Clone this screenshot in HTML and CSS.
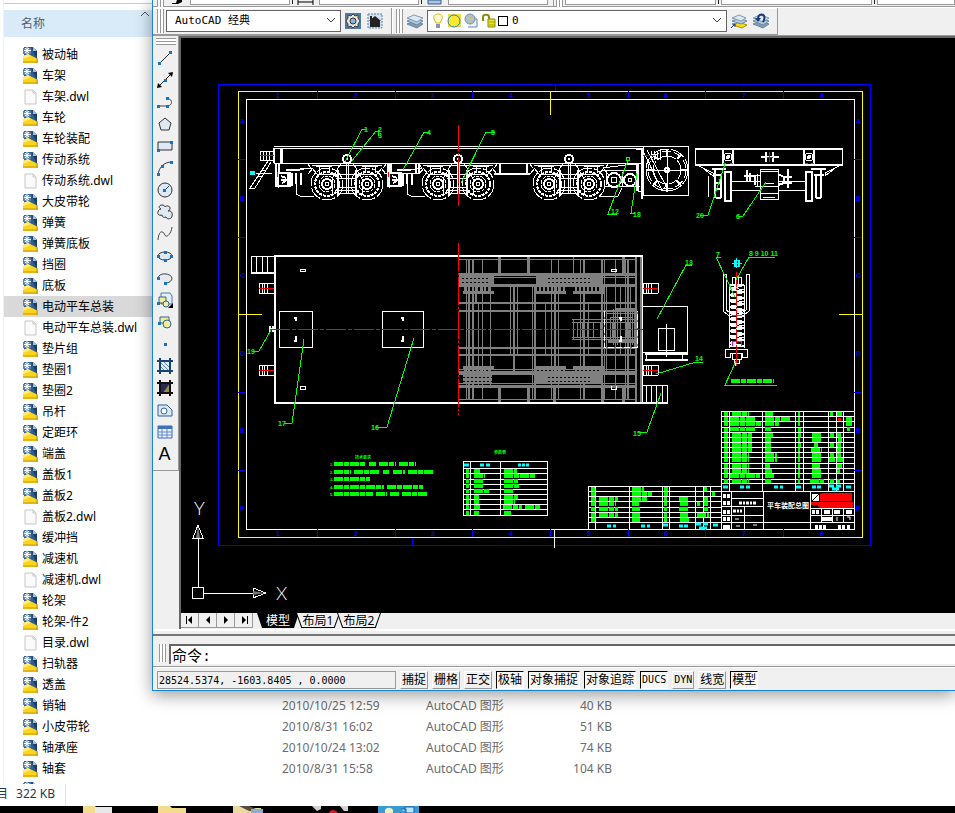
FILE: index.html
```html
<!DOCTYPE html>
<html lang="zh-CN">
<head>
  <meta charset="UTF-8">
  <meta name="viewport" content="width=device-width, initial-scale=1.0">
  <title>AutoCAD</title>
  <link rel="stylesheet" href="styles.css">
</head>
<body>
  <!-- shared symbols -->
  <svg class="symbols" aria-hidden="true">
    <symbol id="dwg" viewBox="0 0 16 16">
      <path d="M1 0h9l4 4v9H1z" fill="#2f5d8c"/>
      <path d="M8 0l6 4v8z" fill="#1b3c66"/>
      <path d="M10 0l4 4h-4z" fill="#a9bfd6"/>
      <path d="M0 1h8v6H0z" fill="#5c83aa"/>
      <path d="M4 0v7M1 3.500h7M2 1l4 5M6 1l-4 5" stroke="#fff"/>
      <path d="M0 9l5-2 10 5v4H0z" fill="#fbd51c"/>
      <path d="M0 9l5-2 3 2-8 3z" fill="#ffea8a"/>
      <path d="M0 15h15M14 11v5" stroke="#c9940e"/>
    </symbol>
    <symbol id="doc" viewBox="0 0 16 16">
      <path d="M2 1h8l3 3v11H2z" fill="#fafafa" stroke="#c6c6c6"/>
      <path d="M10 1v3h3" fill="none" stroke="#c6c6c6"/>
    </symbol>
    <symbol id="layers" viewBox="0 0 16 16">
      <path d="M0 11l7-3 9 3-6 4z" fill="#7f9cba" stroke="#6b87a5"/>
      <path d="M0 8l7-3 9 3-6 4z" fill="#b5c8da" stroke="#6b87a5"/>
      <path d="M0 5l7-3 9 3-6 4z" fill="#dce8f2" stroke="#7d99b6"/>
    </symbol>
  </svg>

  <main class="explorer">
    <table class="files">
      <thead>
        <tr><th class="name">名称<svg class="sort" viewBox="0 0 10 6"><path d="M1 5l4-4 4 4" fill="none" stroke="#555"/></svg></th><th></th><th></th><th></th></tr>
      </thead>
      <tbody>
        <tr><td><svg><use href="#dwg"/></svg>被动轴</td></tr>
        <tr><td><svg><use href="#dwg"/></svg>车架</td></tr>
        <tr><td><svg><use href="#doc"/></svg>车架.dwl</td></tr>
        <tr><td><svg><use href="#dwg"/></svg>车轮</td></tr>
        <tr><td><svg><use href="#dwg"/></svg>车轮装配</td></tr>
        <tr><td><svg><use href="#dwg"/></svg>传动系统</td></tr>
        <tr><td><svg><use href="#doc"/></svg>传动系统.dwl</td></tr>
        <tr><td><svg><use href="#dwg"/></svg>大皮带轮</td></tr>
        <tr><td><svg><use href="#dwg"/></svg>弹簧</td></tr>
        <tr><td><svg><use href="#dwg"/></svg>弹簧底板</td></tr>
        <tr><td><svg><use href="#dwg"/></svg>挡圈</td></tr>
        <tr><td><svg><use href="#dwg"/></svg>底板</td></tr>
        <tr class="selected"><td><svg><use href="#dwg"/></svg>电动平车总装</td></tr>
        <tr><td><svg><use href="#doc"/></svg>电动平车总装.dwl</td></tr>
        <tr><td><svg><use href="#dwg"/></svg>垫片组</td></tr>
        <tr><td><svg><use href="#dwg"/></svg>垫圈1</td></tr>
        <tr><td><svg><use href="#dwg"/></svg>垫圈2</td></tr>
        <tr><td><svg><use href="#dwg"/></svg>吊杆</td></tr>
        <tr><td><svg><use href="#dwg"/></svg>定距环</td></tr>
        <tr><td><svg><use href="#dwg"/></svg>端盖</td></tr>
        <tr><td><svg><use href="#dwg"/></svg>盖板1</td></tr>
        <tr><td><svg><use href="#dwg"/></svg>盖板2</td></tr>
        <tr><td><svg><use href="#doc"/></svg>盖板2.dwl</td></tr>
        <tr><td><svg><use href="#dwg"/></svg>缓冲挡</td></tr>
        <tr><td><svg><use href="#dwg"/></svg>减速机</td></tr>
        <tr><td><svg><use href="#doc"/></svg>减速机.dwl</td></tr>
        <tr><td><svg><use href="#dwg"/></svg>轮架</td></tr>
        <tr><td><svg><use href="#dwg"/></svg>轮架-件2</td></tr>
        <tr><td><svg><use href="#doc"/></svg>目录.dwl</td></tr>
        <tr><td><svg><use href="#dwg"/></svg>扫轨器</td></tr>
        <tr><td><svg><use href="#dwg"/></svg>透盖</td></tr>
        <tr><td><svg><use href="#dwg"/></svg>销轴</td><td>2010/10/25 12:59</td><td>AutoCAD 图形</td><td>40 KB</td></tr>
        <tr><td><svg><use href="#dwg"/></svg>小皮带轮</td><td>2010/8/31 16:02</td><td>AutoCAD 图形</td><td>51 KB</td></tr>
        <tr><td><svg><use href="#dwg"/></svg>轴承座</td><td>2010/10/24 13:02</td><td>AutoCAD 图形</td><td>74 KB</td></tr>
        <tr><td><svg><use href="#dwg"/></svg>轴套</td><td>2010/8/31 15:58</td><td>AutoCAD 图形</td><td>104 KB</td></tr>
        <tr><td><svg><use href="#dwg"/></svg></td></tr>
      </tbody>
    </table>
    <footer class="info"><span class="cut">目</span><span class="total">322 KB</span></footer>
  </main>

  <section class="cad">
    <div class="strip">
      <i class="grip"></i>
      <svg class="brush" viewBox="0 0 12 6"><path d="M6 0h5v2l-4 2H1V3h4z"/></svg>
      <i class="field w100"></i><i class="bar"></i>
      <svg class="dim" viewBox="0 0 20 6"><path d="M2 0v5M17 0v5M2 2h15" fill="none" stroke="#000"/></svg>
      <i class="field w100"></i><i class="bar"></i>
      <svg class="tbl" viewBox="0 0 16 6"><path d="M1 0h13v4H1z" fill="#a9c4e6" stroke="#35588c"/></svg>
      <i class="field w100"></i><i class="end"></i><i class="grip"></i>
      <i class="field w150"></i><i class="bar"></i><i class="field w150"></i><i class="bar"></i><i class="field rest"></i>
    </div>

    <div class="toolbars">
      <div class="toolbar">
        <i class="grip"></i>
        <select class="workspace-select" aria-label="工作空间"><option>AutoCAD 经典</option></select>
        <button class="tool" aria-label="工作空间设置"><svg viewBox="0 0 16 16"><path d="M0 0h16v16H0z" fill="#4d7ba3"/><path d="M8 1l2 2 3-1 0 3 2 3-2 3 0 3-3-1-2 2-2-2-3 1 0-3-2-3 2-3 0-3 3 1z" fill="#e8e4da" stroke="#444"/><circle cx="8" cy="8" r="3" fill="#8ab4d8" stroke="#333"/></svg></button>
        <button class="tool" aria-label="我的工作空间"><svg viewBox="0 0 16 16"><path d="M1 1h14v14H1z" fill="#d5e2ee" stroke="#5b7fa5" stroke-dasharray="2 1"/><path d="M2 8l6-5 6 5h-1v6H3V8z" fill="#222"/><path d="M4 3v4" stroke="#222" stroke-width="2"/></svg></button>
      </div>
      <div class="toolbar">
        <i class="grip"></i>
        <button class="tool" aria-label="图层特性"><svg><use href="#layers"/></svg></button>
        <div class="layer">
          <svg class="layer-icons" viewBox="0 0 66 16">
            <path d="M6 1c-3 0-5 2-4 5l2 4h4l2-4c1-3-1-5-4-5z" fill="#fffad0" stroke="#d6b61e"/><path d="M4 11h4v4H4z" fill="#8795a8"/>
            <path d="M16 1h13v13H16z" fill="#e8dd50"/><circle cx="22" cy="8" r="6" fill="#ffe92e" stroke="#2383b5"/>
            <path d="M38 6h7v8h-9" fill="#eef3f8" stroke="#6487b0"/><circle cx="38" cy="6" r="5" fill="#a9bfd8" stroke="#6d90b8"/><path d="M38 2v8M34 6h8" stroke="#d9c65a"/>
            <path d="M51 8V4c0-3 6-3 6 0v4" fill="none" stroke="#8b8b10" stroke-width="2"/><path d="M56 6h7v8h-7z" fill="#e5e820" stroke="#8b8b10"/><path d="M57 9h6M57 12h6" stroke="#a5a510"/>
          </svg>
          <i class="swatch"></i>
          <select aria-label="图层"><option>0</option></select>
        </div>
        <button class="tool" aria-label="置为当前"><svg viewBox="0 0 16 16"><path d="M2 12l6-3 8 3-5 3z" fill="#f3dc1c" stroke="#ad9000"/><path d="M1 8l7-3 8 3-6 3z" fill="#b5c8da" stroke="#6b87a5"/><path d="M1 5l7-3 7 3-5 3z" fill="#dce8f2" stroke="#7d99b6"/><path d="M0 15l4-4M1 11h3v3" fill="none" stroke="#123a72"/></svg></button>
        <button class="tool" aria-label="上一个图层"><svg viewBox="0 0 16 16"><use href="#layers"/><path d="M10 9c5-8-4-10-5-4" fill="none" stroke="#173a74" stroke-width="2"/><path d="M2 5h6l-3 4z" fill="#173a74"/></svg></button>
      </div>
    </div>

    <div class="workspace">
      <div class="palette-dock">
        <div class="palette">
          <i class="grip-h"></i>
          <button aria-label="直线"><svg viewBox="0 0 16 16"><path d="M2 14L14 2" stroke="#222"/><path class="n" d="M1 12h3v3H1zM12 1h3v3h-3z"/></svg></button>
          <button aria-label="构造线"><svg viewBox="0 0 16 16"><path d="M1 15L15 1" stroke="#222"/><path d="M0 16l1-5 4 4zM16 0l-5 1 4 4z"/><path class="n" d="M7 7h3v3H7z"/></svg></button>
          <button aria-label="多段线"><svg viewBox="0 0 16 16"><path d="M1 12h9c6 0 6-8 0-7" fill="none" stroke="#444"/><path class="n" d="M0 11h3v3H0zM9 11h3v3H9zM9 3h3v3H9z"/></svg></button>
          <button aria-label="正多边形"><svg viewBox="0 0 16 16"><path class="f" d="M8 2l6 5-2 7H4L2 7z"/></svg></button>
          <button aria-label="矩形"><svg viewBox="0 0 16 16"><path class="f" d="M1 4h14v8H1z"/><path class="n" d="M0 11h3v3H0zM13 3h3v3h-3z"/></svg></button>
          <button aria-label="圆弧"><svg viewBox="0 0 16 16"><path d="M1 15C2 7 7 2 15 2" fill="none" stroke="#333"/><path class="n" d="M0 13h3v3H0zM4 5h3v3H4zM13 1h3v3h-3z"/></svg></button>
          <button aria-label="圆"><svg viewBox="0 0 16 16"><circle class="f" cx="8" cy="8" r="7"/><path d="M8 8l4-4" stroke="#16549b"/><path class="n" d="M6 7h3v3H6z"/></svg></button>
          <button aria-label="修订云线"><svg viewBox="0 0 16 16"><path class="f" d="M4 5C1 4 2 1 5 1c2 0 3 1 3 2 1-2 6-1 5 2-1 1-1 2-2 2 3-1 5 2 4 5 0 3-5 4-6 1-2 1-4 0-4-2-3 1-5-1-4-3 0-1 1-3 3-3z"/></svg></button>
          <button aria-label="样条曲线"><svg viewBox="0 0 16 16"><path d="M1 14C2 2 7 6 8 9s6 0 7-8" fill="none" stroke="#444"/></svg></button>
          <button aria-label="椭圆"><svg viewBox="0 0 16 16"><ellipse class="f" cx="8" cy="8" rx="7" ry="4"/><path class="n" d="M0 7h3v3H0zM13 7h3v3h-3zM7 3h3v3H7zM7 11h3v3H7z"/></svg></button>
          <button aria-label="椭圆弧"><svg viewBox="0 0 16 16"><path d="M1 8c1-6 13-5 14 0 0 3-3 5-7 5" fill="#e2ebf4" stroke="#444"/><path class="n" d="M0 7h3v3H0zM7 12h3v3H7z"/></svg></button>
          <button aria-label="插入块"><svg viewBox="0 0 16 16"><path d="M4 1h9l2 3v8H4z" fill="#e4eef8" stroke="#4b7db0"/><path class="y" d="M2 5h7v6H2z"/><circle class="y" cx="9" cy="12" r="3"/><path class="n" d="M0 10h3v3H0z"/><path d="M16 11v5h-5z"/></svg></button>
          <button aria-label="创建块"><svg viewBox="0 0 16 16"><path class="y" d="M3 3h9v6H3z"/><circle class="y" cx="10" cy="10" r="4"/><path class="n" d="M1 8h3v3H1z"/></svg></button>
          <button aria-label="点"><svg viewBox="0 0 16 16"><path class="n" d="M7 7h3v3H7z"/></svg></button>
          <button aria-label="图案填充"><svg viewBox="0 0 16 16"><path d="M3 3h10v10H3z" fill="#e3edf6"/><path d="M3 4l9 9M7 4l6 6M3 8l5 5" stroke="#5e88b4"/><path d="M3 0v16M13 0v16M0 3h16M0 13h16" stroke="#174475" stroke-width="2"/></svg></button>
          <button aria-label="渐变色"><svg viewBox="0 0 16 16"><path d="M3 3h10v10H3z" fill="#252a58"/><path d="M13 3v10H6z" fill="#94903f"/><path d="M3 0v16M13 0v16M0 3h16M0 13h16" stroke="#111" stroke-width="2"/></svg></button>
          <button aria-label="面域"><svg viewBox="0 0 16 16"><path d="M1 3h9l5 5v6H1z" fill="#dae8f5" stroke="#2d659b"/><circle cx="7" cy="9" r="3" fill="#fff" stroke="#2d659b"/></svg></button>
          <button aria-label="表格"><svg viewBox="0 0 16 16"><path d="M1 2h14v12H1z" fill="#eaf2fc" stroke="#3d69b0"/><path d="M1 2h14v3H1z" fill="#3e70c0"/><path d="M1 8h14M1 11h14M5 5v9M10 5v9" stroke="#5f8acb"/></svg></button>
          <button class="mtext" aria-label="多行文字">A</button>
        </div>
      </div>

      <div class="view">
        <div class="canvas">
          <svg viewBox="181 38 774 575" preserveAspectRatio="xMinYMin slice">
            <defs>
              <g id="wheel"><circle r="16" stroke-dasharray="14 2"/><circle r="12" stroke-width="2" stroke-dasharray="3 1"/><circle r="8" stroke-dasharray="4 1"/><circle r="5" stroke-width="2"/><circle r="2"/></g>
              <g id="bogie">
                <use href="#wheel" x="-20" y="184"/><use href="#wheel" x="20" y="184"/>
                <circle cy="159" r="4" stroke-width="2"/><circle cy="159" r="1"/>
                <path d="M-6 163l-9 16v16M6 163l9 16v16M-1 164v29M1 164v29M-35 165H35M-35 168l5 6H30l5-6M-28 166v7M-18 166v7M18 166v7M28 166v7M-8 178H8M-8 187H8M-12 190H12M-10 193H10M-40 163l4 5M40 163l-4 5M-34 168l-5 6M34 168l5 6"/>
                <path stroke-width="2" d="M-31 166H-15M15 166H31M-9 170v25M9 170v25"/>
              </g>
              <g id="gearbox"><path stroke-width="2" d="M0 173H12V186H0zM8 170H22M14 173v13M18 173v11M23 173v12M3 176l5 2M4 183l5-3M3 180h6M10 174v11"/><path d="M18 180v14l4 2H36M12 171L33 168M0 163v25"/></g>
              <g id="coupler"><path d="M0 0H15M0 10H15M0 1v9M3 0v10M5 0v10M8 0v10M15 0v10"/><path class="red" d="M0 5H15"/></g>
              <g id="hub"><path d="M-5 -8V7M5 -8V7" stroke-width="2"/><circle r="4"/><circle r="1" stroke-width="2"/></g>
            </defs>

            <!-- sheet frames -->
            <g class="line">
              <path class="blue" d="M218 84H870V545H218zM412 538v7M555 84v7"/>
              <path class="yellow" d="M238 91H862V537H238zM550 91v24M238 314h24M839 314h23"/>
              <path d="M246 99H854V529H246zM554 529v19"/>
              <path class="blue" d="M317 91v8M395 91v8M472 91v8M628 91v8M705 91v8M783 91v8M317 529v8M395 529v8M472 529v8M550 529v8M628 529v8M705 529v8M783 529v8M238 159h8M238 237h8M238 392h8M238 470h8M854 159h8M854 237h8M854 392h8M854 470h8"/>
            </g>
            <g class="zone">
              <text x="276" y="98">1</text><text x="354" y="98">2</text><text x="431" y="98">3</text><text x="509" y="98">4</text><text x="587" y="98">5</text><text x="664" y="98">6</text><text x="742" y="98">7</text><text x="820" y="98">8</text>
              <text x="276" y="536">1</text><text x="354" y="536">2</text><text x="431" y="536">3</text><text x="509" y="536">4</text><text x="587" y="536">5</text><text x="664" y="536">6</text><text x="742" y="536">7</text><text x="820" y="536">8</text>
              <text x="240" y="124">A</text><text x="240" y="201">B</text><text x="240" y="278">C</text><text x="240" y="356">D</text><text x="240" y="433">E</text><text x="240" y="511">F</text>
              <text x="856" y="124">A</text><text x="856" y="201">B</text><text x="856" y="278">C</text><text x="856" y="356">D</text><text x="856" y="433">E</text><text x="856" y="511">F</text>
            </g>

            <!-- side view -->
            <g class="line">
              <path d="M274 146H643M274 148H643M281 163H643M274 148H282V163H274zM260 151H273V160H260zM263 151v9M266 151v9M269 151v9M256 173h16M268 161L250 188H255L271 162M262 170h4M258 176h4"/>
              <path stroke-width="2" d="M274 148v15M281 149v15M276 164v23M279 164v9M388 164v23M391 164v9M416 164v10M419 164v10M500 164v10M527 164v10M494 174h36"/>
              <path d="M384 173h36M300 168h13"/>
              <use href="#bogie" x="347"/><use href="#bogie" x="458"/><use href="#bogie" x="569"/>
              <use href="#gearbox" x="278"/><use href="#gearbox" x="389"/>
              <circle cx="614" cy="180" r="7" stroke-width="2"/><circle cx="614" cy="180" r="3"/><circle cx="630" cy="180" r="6" stroke-width="2"/><circle cx="630" cy="180" r="2"/>
              <path d="M603 170H638M604 186H640M600 196H618L622 188M603 168L625 165 637 164M636 149H643V191H638V164M606 173v12M622 172v14M643 146H688V195H643zM644 153L662 190 666 186 647 150"/>
              <path stroke-width="2" d="M642 148V199M637 164V191"/>
              <circle cx="667" cy="170" r="21" stroke-dasharray="15 2"/><circle cx="667" cy="170" r="19" stroke-dasharray="9 3"/><circle cx="667" cy="170" r="14" stroke-dasharray="9 2"/><circle cx="667" cy="170" r="2" stroke-width="2"/>
              <path stroke-width="2" d="M667 149v8M667 184v8M646 170h9M680 170h8M653 155l4 4M681 155l-4 4M653 185l4-4M681 185l-4-4"/><path d="M667 157v27M655 170h25M651 151v9M654 151v9M657 151v9M660 151v9"/>
              <path class="red" d="M260 155h14M643 155h12M277 172v5M388 172v5"/>
              <path class="red" stroke-dasharray="26 2 2 2" d="M458 125V206"/>
            </g>
            <rect x="250" y="171" width="5" height="4" fill="#0ff"/>

            <!-- end view -->
            <g class="line">
              <path d="M695 149H842V164H695zM697 165L713 173V176L704 169M841 165L825 173V176L834 169M708 176V197M731 181H760M778 181H806M731 190H760M778 190H806"/>
              <path stroke-width="2" d="M695 149H843M695 165H843M761 157h18M766 152v10M773 152v10M725 172V201H731V172zM806 172V201H812V172zM715 170V198M721 174V198M816 174V198M821 170V198M712 169H726M811 169H826M714 175H722M814 175H824M716 183h4M716 189h4M716 198h5M816 198h5M744 176h12M778 174L784 177V183L778 185M788 169v19M785 177h7M785 183h7M747 170v12M750 173v8M755 175v10"/>
              <path d="M760 169H778V199H760zM760 171h18M760 186h18M760 193h18M763 197h12M757 174V186M755 175h6M755 186h6M766 183h8"/>
              <use href="#hub" x="728" y="157"/><use href="#hub" x="809" y="157"/>
              <path class="red" d="M769 152v10M767 157h6"/><path stroke="#f0f" d="M723 163h3M730 163h3M805 163h3M811 163h3"/>
            </g>

            <!-- plan view, open half -->
            <g class="line grey">
              <path d="M459 259H637M459 277H637M459 369H637M459 374H637M459 383H637M459 385H637M459 399H637M466 259V399M478 303V385M482 259V399M490 285V385M510 285V355M517 285V355M532 285V399M545 303V355M551 259V399M558 259V399M573 256V277M580 259V399M588 303V355M604 259V399M606 285V372M615 259V399M620 285V355M625 259V399M630 285V355"/>
              <path stroke-width="2" d="M459 303H637M459 311H637M459 348H637M459 355H637M469 259V399M473 259V399M476 285V303M514 285V372M535 285V399M555 285V372M584 259V399M602 259V399M628 259V399M636 257V402M641 257V402"/>
              <path stroke-width="3" d="M459 274H637M459 285H637M499 256V276M528 256V276M623 256V276M499 386V402M528 386V402M554 386V402M602 386V402M623 386V402M459 372H637M459 386H637"/>
              <path stroke-width="10" d="M459 280H494M536 280H603M463 379H492M536 379H602"/>
              <path stroke-width="3" d="M463 292H494M534 292H566M573 292H605M463 367H494M534 367H566M573 367H605"/>
              <path stroke-width="4" stroke-dasharray="2 2" d="M464 289H492M535 289H565M575 289H604M464 371H492M535 371H565M575 371H604"/>
              <path d="M572 319H637M572 322H637M572 337H637M572 339H637M573 319V339M577 322V337M582 322V337M587 322V337M593 322V337M600 322V337M606 313H636M610 317H632V342H610zM613 309V345M617 309V345M632 309V345"/>
              <path stroke-width="4" d="M615 310H637M608 341H634M636 311V348M614 322V337M628 322V337"/>
            </g>
            <g class="line"><path stroke="#000" stroke-dasharray="2 2" d="M462 278H490M548 278H590M462 282H490M548 282H590M463 377H492M548 377H590M463 381H492M548 381H590"/></g>

            <g class="line">
              <path stroke-width="2" d="M643 256H275V403H643M251 273H275"/>
              <path d="M642 255V403M251 256H275M251 256V273M256 256V273M262 256V273M267 256V273M279 311H312V347H279zM382 311H423V347H382zM300 269h5v2h-5zM300 386h5v3h-5zM611 269h5v2h-5zM611 386v3h5v-3"/>
              <path stroke-dasharray="6 2" d="M604 311V347H637V311"/>
              <path stroke-width="2" d="M294 318h2v3M296 336v5h-2M401 318h2v3M403 336v5h-2M619 318h2v3M621 336v5h-2M270 326v6M273 326v6M269 329h5"/>
              <use href="#coupler" x="259" y="283"/><use href="#coupler" x="259" y="365"/><use href="#coupler" x="643" y="283"/><use href="#coupler" x="643" y="365"/>
              <path d="M643 306H687V352H643M658 328H674V350H658zM666 324V357M646 355v4M682 355v4M643 385H667V403H643M646 386v17M651 386v17M656 386v17M662 386v17"/>
              <path stroke-width="2" d="M645 354H688M645 360H688M643 403H668"/>
              <path class="red" stroke-dasharray="20 2 4 2" d="M270 329H643"/><path class="red" stroke-dasharray="28 2 2 2" d="M458 243V415"/>
            </g>

            <!-- spring -->
            <g class="line">
              <path d="M723 274V311L728 315H744L749 311V274H746V310L743 312H729L726 310V274z"/>
              <path d="M732 277H741V284H732zM735 277V284M738 277V284"/>
              <path stroke-width="2" d="M729 285H744L729 289 744 292 729 295 744 298 729 301 744 304 729 307 744 310 729 313 744 316 729 319 744 322 729 325 744 328 729 331 744 334 729 337 744 340 729 343 744 346H729"/>
              <path d="M729 285V348M744 285V348M729 287l15 3M729 299l15 3M729 311l15 3M729 323l15 3M729 335l15 3"/>
              <path d="M725 349H747V357H742V353H730V357H725zM732 353H741V359H732zM734 359H739V363H734zM735 363V366"/>
              <path stroke="#f0f" d="M732 346V341H741V346M732 315h10"/><path class="red" stroke-dasharray="15 1 2 1" d="M736 272V367"/>
              <path stroke="#0ff" d="M734 260H739V266H734zM732 263H742M736 258V268M735 260v6M738 260v6"/>
            </g>

            <!-- leaders -->
            <g class="line green">
              <path d="M345 162L362 129H367M351 162L376 131H380M378 130V136M403 170L424 132H430M461 183L486 132H495M628 160L608 214H617M637 173L631 213H635M725 164L708 215H700M766 182L743 216H738M271 330L259 351H252M304 339L292 423H284M414 338L387 427H376M657 319L686 265H692M656 374L696 362H703M661 393L647 432H640M735 297L716 257H721M736 280L749 257H775M736 361L725 385H777"/>
              <circle cx="628" cy="159" r="2"/>
            </g>
            <g class="mark">
              <text x="364" y="132">1</text><text x="378" y="132">2</text><text x="378" y="138">3</text><text x="427" y="135">4</text><text x="491" y="135">5</text><text x="611" y="214">12</text><text x="633" y="217">18</text><text x="696" y="218">20</text><text x="736" y="219">6</text>
              <text x="247" y="354">19</text><text x="278" y="426">17</text><text x="371" y="430">16</text><text x="685" y="265">13</text><text x="695" y="361">14</text><text x="633" y="436">15</text><text x="716" y="257">7</text><text x="749" y="256">8 9 10 11</text>
            </g>
            <path class="scribble" d="M731 381H774"/>

            <!-- technical notes -->
            <g class="note">
              <text x="355" y="459">技术要求</text><text x="494" y="454">参数表</text>
              <text x="330" y="466">1.</text><text x="330" y="474">2.</text><text x="330" y="481">3.</text><text x="330" y="489">4.</text><text x="330" y="496">5.</text>
            </g>
            <path class="scribble" d="M334 464H366M369 464H376M379 464H396M399 464H416M334 472H351M354 472H380M383 472H389M393 472H405M408 472H434M334 479H370M334 487H384M387 487H423M334 494H373M376 494H387M390 494H399M402 494H427"/>

            <!-- parameter table -->
            <g class="line"><path d="M463 461H547V515H463zM470 461V515M500 461V515M463 468H548M463 473H548M463 479H548M463 484H548M463 489H548M463 494H548M463 499H548M463 504H548M463 509H548"/></g>
            <path class="scribble" d="M466 471h3M466 476h3M466 481h3M466 486h3M466 491h3M466 497h3M466 502h3M466 507h3M466 513h3M474 471h6M474 476h11M474 481h10M474 486h10M474 491h16M474 497h5M474 502h5M474 507h6M474 513h5M504 471h13M504 476h31M504 481h14M504 486h16M504 491h9M504 497h14M504 502h11M503 507h19M525 507h16M504 513h7"/>
            <path class="cyan" d="M464 465h5M480 465h4M486 465h4M518 465h3M522 465h3M526 465h3"/>

            <!-- parts list -->
            <g class="line"><path d="M721 411H855M721 416H855M721 421H855M721 427H855M721 432H855M721 437H855M721 442H855M721 447H855M721 452H855M721 457H855M721 463H855M721 468H855M721 473H855M721 479H855M721 483H855M588 491H855M588 491M721 411V529M729 411V491M762 411V491M795 411V491M803 411V491M828 411V491M836 411V491M843 411V491M588 486H721M588 496H721M588 501H721M588 507H721M588 512H721M588 517H721M588 522H721M588 486V529M595 486V529M629 486V529M662 486V529M669 486V529M695 486V529M703 486V529M710 486V529"/></g>
            <path class="scribble" d="M724 414h4M724 419h4M724 424h4M724 430h4M724 435h4M724 440h4M724 445h4M724 450h4M724 455h4M724 460h4M724 466h4M724 471h4M724 476h4M724 481h4M732 414h17M730 419h25M730 424h31M730 429h26M732 435h20M732 440h20M732 445h20M732 450h20M732 455h17M732 460h17M732 466h17M732 471h17M730 476h30M732 481h17M765 414h8M765 419h26M765 424h14M765 429h6M765 435h8M765 440h6M765 445h6M765 450h6M765 455h12M765 460h12M765 466h5M765 471h7M765 476h9M765 481h6M798 414h2M798 419h2M798 424h2M798 430h3M798 435h3M798 440h2M798 445h3M798 450h2M798 455h2M798 460h2M798 466h2M798 471h2M798 476h2M798 481h2M812 435h10M812 440h10M814 445h4M811 450h11M812 455h9M812 460h9M812 466h8M812 471h9M812 476h9M810 481h14M830 414h3M837 414h5M846 419h6M846 424h6M847 429h3M830 435h4M837 435h4M838 440h4M830 445h4M837 445h4M837 450h4M830 455h4M837 455h4M829 460h6M837 460h6M837 466h5M837 471h3M830 481h4M837 481h3"/>
            <path class="scribble" d="M591 489h4M591 494h4M591 499h4M591 504h4M591 509h4M591 515h4M591 520h4M599 499h19M599 504h17M599 509h19M599 515h19M632 489h12M632 494h20M632 499h16M632 504h7M632 509h8M632 515h8M632 520h8M664 489h4M664 494h4M664 499h3M664 504h3M664 509h3M664 515h3M664 520h3M679 499h10M680 504h8M679 509h10M680 515h8M680 520h9M704 489h3M712 494h3M704 499h4M697 504h3M704 504h4M704 509h4M697 515h12"/>
            <path class="cyan" d="M723 487h5M740 487h4M746 487h4M774 487h4M780 487h3M796 487h5M812 487h4M817 487h4M829 486h5M832 489h7M836 486h5M846 487h5M607 526h4M613 526h3M641 526h4M647 526h3M663 525h5M679 526h4M684 526h4M696 524h5M699 528h8M703 524h5M713 525h5"/>

            <!-- title block -->
            <g class="line"><path d="M731 491V529M763 491V529M810 491V529M744 506V529M731 498H763M721 506H763M731 515H763M721 515H731M721 522H855M810 508H855M810 515H855M821 508V522M832 508V522M843 508V522"/></g>
            <path class="ink" d="M723 496h3M727 496h3M723 503h3M727 503h3M723 512h3M727 512h3M723 519h3M727 519h3M723 527h7M812 512h3M816 512h3M824 512h6M834 512h6M846 512h6M822 519h10M815 527h3M819 527h3M823 527h3M838 527h3M842 527h3M847 527h3"/>
            <path d="M739 503h17M733 511h9" stroke="#fff" stroke-width="3" stroke-dasharray="3 1 2 1"/>
            <path d="M735 519h4M736 526h4M753 525h4M837 517v4M847 517h3v3" fill="none" stroke="#fff"/>
            <path d="M812 494h7v7h-7z" fill="#fff"/><path d="M820 494l2-1h30v8h-32zM811 502h42v6h-33l-3-3h-6zM838 418h3v3h-3z" fill="#f00"/><path d="M812 501l7-7" stroke="#000"/>
            <text class="title" x="767" y="508">平车装配总图</text>

            <!-- UCS icon -->
            <g class="line"><path d="M192 587H203V598H192zM198 587V539M203 593H253M198 525L193 538H203zM266 593L253 588V598z"/></g>
            <path d="M198 526l-2 12h4zM265 593l-12-2v4z" fill="#777"/>
            <text class="axis" x="194" y="515">Y</text><text class="axis" x="276" y="600">X</text>
          </svg>
        </div>
        <div class="tabs">
          <button class="nav" aria-label="第一个"><svg viewBox="0 0 10 10"><path d="M1 1h1v8H1zM7 1v8L3 5z"/></svg></button>
          <button class="nav" aria-label="上一个"><svg viewBox="0 0 10 10"><path d="M7 1v8L3 5z"/></svg></button>
          <button class="nav" aria-label="下一个"><svg viewBox="0 0 10 10"><path d="M3 1v8l4-4z"/></svg></button>
          <button class="nav" aria-label="最后一个"><svg viewBox="0 0 10 10"><path d="M3 1v8l4-4zM8 1h1v8H8z"/></svg></button>
          <button class="tab active">模型</button><button class="tab">布局1</button><button class="tab">布局2</button>
        </div>
      </div>
    </div>

    <div class="command">
      <i class="grip"></i>
      <input type="text" value="命令:" aria-label="命令行">
    </div>

    <div class="status">
      <output class="coords">28524.5374, -1603.8405 , 0.0000</output>
      <button>捕捉</button><button>栅格</button><button>正交</button><button class="on">极轴</button><button class="on">对象捕捉</button><button class="on">对象追踪</button><button class="on mono">DUCS</button><button class="mono">DYN</button><button>线宽</button><button class="on">模型</button>
    </div>
  </section>

  <div class="taskbar">
    <svg viewBox="0 0 340 7">
      <path d="M0 0h12l2 2h14v5H0z" fill="#f4dc8e"/><path d="M12 1h17v6H12z" fill="#e8e8e8"/>
      <path d="M75 0h12l2 2h14v5H75z" fill="#f4dc8e"/>
      <path d="M150 0h12l2 2h14v5h-28z" fill="#ead9a0"/><path d="M156 0h10l14 6-14-1z" fill="#5b4a3e"/><path d="M168 3h12v4h-12z" fill="#8bb0cc"/>
      <path d="M229 0h9v3l-4 2zM257 0h8v5h-4z" fill="#d8d0d6"/><path d="M247 5c3-2 6-1 8 2h-9z" fill="#d0182a"/>
      <path d="M295 0h41v7h-41z" fill="#3c9ad3"/><path d="M302 4c2-3 6-3 8 0v3h-8z" fill="#e8f4c8"/><path d="M318 3h5v4M322 1h9v6h-9z" fill="#bfe3f8" stroke="#0d62b4"/>
    </svg>
  </div>
</body>
</html>
```

FILE: styles.css
```css
* {
  box-sizing: border-box;
}
body {
  margin: 0;
  height: 100vh;
  display: flex;
  flex-direction: column;
  overflow: hidden;
  position: relative;
  background: #fff;
  font: 12px/20px "Noto Sans", "Noto Sans CJK SC", sans-serif;
}
button, select, input {
  margin: 0;
  padding: 0;
  border: 0;
  border-radius: 0;
  background: none;
  color: #000;
  font: inherit;
}
.symbols {
  display: none;
}

/* 资源管理器 */
.explorer {
  flex: 1;
  min-height: 0;
  display: flex;
  flex-direction: column;
  overflow: hidden;
}
.files {
  flex: 1;
  display: block;
  min-height: 0;
  overflow: hidden;
  margin-left: 3px;
  padding-top: 10px;
  border-left: 1px solid #f0f0f0;
  border-collapse: collapse;
  background: linear-gradient(#ccc, #ccc) 0 3px / 100% 1px no-repeat;
}
.files th {
  height: 27px;
  padding: 0;
  background: #d9ebf9;
  color: #4c607a;
  font-weight: normal;
  text-align: left;
}
.files .name {
  width: 270px;
  padding-left: 17px;
  position: relative;
}
.sort {
  position: absolute;
  left: 136px;
  top: 1px;
  width: 10px;
  height: 6px;
}
.files tbody::before {
  content: "";
  display: block;
  height: 7px;
}
.files td {
  height: 21px;
  padding: 0;
  line-height: 20px;
  white-space: nowrap;
  color: #6d6d6d;
}
.files td:first-child {
  padding-left: 19px;
  color: #000;
}
.files td svg {
  width: 16px;
  height: 16px;
  margin-right: 3px;
  vertical-align: middle;
}
.files td:nth-child(2) {
  width: 148px;
  padding-left: 8px;
}
.files td:nth-child(3) {
  width: 120px;
  padding-left: 4px;
}
.files td:nth-child(4) {
  width: 70px;
  text-align: right;
}
.selected td {
  background: #d9d9d9;
}
.info {
  height: 22px;
  display: flex;
  gap: 8px;
  color: #1e395b;
}
.cut {
  margin-left: -4px;
}
.total {
  padding-right: 10px;
  border-right: 1px solid #e5e5e5;
}

/* 任务栏 */
.taskbar {
  height: 7px;
  padding-left: 83px;
  background: #000;
}
.taskbar svg {
  display: block;
  width: 340px;
  height: 7px;
}

/* CAD 窗口 */
.cad {
  position: absolute;
  top: 0;
  left: 152px;
  right: 0;
  bottom: 122px;
  display: flex;
  flex-direction: column;
  border: solid #1883d7;
  border-width: 0 0 1px 1px;
  background: #f0f0f0;
  box-shadow: 0 4px 16px rgba(0, 0, 0, .4);
}
.grip {
  flex: none;
  width: 7px;
  height: 24px;
  border: solid #999;
  border-width: 0 1px;
  background: linear-gradient(90deg, #fff 2px, #999 2px, #999 3px, #fff 3px);
}
.strip {
  flex: none;
  height: 8px;
  display: flex;
  gap: 2px;
  padding-left: 4px;
  overflow: hidden;
  border-bottom: 1px solid #fff;
  box-shadow: inset 0 -1px #999;
}
.strip svg {
  flex: none;
  height: 6px;
}
.brush, .dim, .tbl {
  width: 22px;
}
.field {
  flex: none;
  height: 5px;
  background: #fff;
  border: solid #999;
  border-width: 0 1px 1px;
}
.w100 {
  width: 100px;
}
.w150 {
  width: 151px;
}
.rest {
  flex: 1;
}
.bar {
  flex: none;
  width: 1px;
  height: 4px;
  background: #222;
}
.end {
  width: 4px;
  border-right: 1px solid #999;
}
.toolbars {
  flex: none;
  height: 28px;
  display: flex;
  border-bottom: 1px solid #999;
}
.toolbar {
  display: flex;
  align-items: center;
  gap: 2px;
  padding: 0 6px 0 4px;
  border: solid #999;
  border-width: 0 1px 1px 0;
  box-shadow: inset 1px 1px #fff;
}
select {
  appearance: none;
  background: #fff url("data:image/svg+xml,%3Csvg xmlns='http://www.w3.org/2000/svg' width='9' height='6'%3E%3Cpath d='M0 0l4 4 4-4' fill='none' stroke='%23444'/%3E%3C/svg%3E") right 4px center no-repeat;
  font: 11px/20px "DejaVu Sans Mono", "Noto Sans CJK SC", monospace;
}
.workspace-select {
  width: 175px;
  height: 22px;
  padding-left: 8px;
  border: 1px solid #666;
}
.tool {
  width: 20px;
  height: 20px;
}
.tool svg {
  display: block;
  width: 16px;
  height: 16px;
  margin: auto;
}
.layer {
  display: flex;
  align-items: center;
  width: 300px;
  height: 22px;
  padding-left: 4px;
  border: 1px solid #666;
  background: #fff;
}
.layer-icons {
  width: 66px;
  height: 16px;
}
.swatch {
  width: 10px;
  height: 10px;
  border: 1px solid #000;
}
.layer select {
  flex: 1;
  height: 20px;
  padding-left: 4px;
}

.workspace {
  flex: 1;
  min-height: 0;
  display: flex;
}
.palette-dock {
  width: 26px;
}
.palette {
  display: flex;
  flex-direction: column;
  padding: 2px 2px 5px 0;
  border: solid #999;
  border-width: 0 1px 1px 0;
}
.palette button {
  height: 22px;
}
.palette svg {
  display: block;
  width: 16px;
  height: 16px;
  margin: 0 auto;
}
.palette .n {
  fill: #1673c4;
}
.palette .f {
  fill: #dfe9f3;
  stroke: #333;
}
.palette .y {
  fill: #f3ec9a;
  stroke: #31648f;
}
.palette .mtext {
  font: 18px/20px "Liberation Sans", sans-serif;
}
.grip-h {
  height: 7px;
  margin: 0 0 2px 3px;
  border: solid #999;
  border-width: 1px 0;
  background: linear-gradient(#fff 2px, #999 2px, #999 3px, #fff 3px);
}
.view {
  flex: 1;
  min-width: 0;
  display: flex;
  flex-direction: column;
  border: solid #666;
  border-width: 2px 0 0 2px;
}
.canvas {
  flex: 1;
  min-height: 0;
  background: #000;
  overflow: hidden;
}
.canvas svg {
  display: block;
  width: 100%;
  height: 100%;
}

/* 图形 */
.line {
  fill: none;
  stroke: #fff;
  shape-rendering: crispEdges;
}
.red {
  stroke: #f00;
}
.blue {
  stroke: #00f;
}
.yellow {
  stroke: #ff0;
}
.grey {
  stroke: #808080;
}
.green {
  stroke: #0f0;
}
.zone {
  fill: #00f;
  font: bold 7px "Liberation Sans", sans-serif;
}
.mark {
  fill: #0f0;
  font: bold 7px "Liberation Sans", sans-serif;
}
.note {
  fill: #0f0;
  font: bold 4px "Liberation Sans", "Noto Sans CJK SC", sans-serif;
}
.scribble {
  fill: none;
  stroke: #0f0;
  stroke-width: 4px;
  stroke-dasharray: 9px 1px 5px 1px;
}
.cyan {
  stroke: #0ff;
  stroke-width: 3px;
}
.ink {
  stroke: #fff;
  stroke-width: 4px;
}
.title {
  fill: #fff;
  font: bold 7px "Noto Sans CJK SC", sans-serif;
}
.axis {
  fill: #fff;
  font: 300 18px "Lato", sans-serif;
}

.tabs {
  flex: none;
  height: 16px;
  display: flex;
  padding-bottom: 1px;
}
.nav {
  width: 18px;
  border: solid #999;
  border-width: 0 1px 1px 0;
}
.nav svg {
  display: block;
  width: 10px;
  height: 10px;
  margin: 0 auto;
}
.tab {
  width: 44px;
  margin-right: -3px;
  line-height: 14px;
  background: #000;
  clip-path: polygon(0 0, 100% 0, 88% 100%, 12% 100%);
  position: relative;
  z-index: 0;
}
.tab::before {
  content: "";
  position: absolute;
  inset: 0 1px 1px;
  z-index: -1;
  background: #f0f0f0;
  clip-path: polygon(0 0, 100% 0, 88% 100%, 12% 100%);
}
.tab.active {
  margin-left: 4px;
  width: 42px;
  color: #fff;
}
.tab.active::before {
  background: #000;
}
.command {
  flex: none;
  height: 38px;
  display: flex;
  padding: 15px 0 2px 6px;
  gap: 3px;
  border-bottom: 1px solid #999;
  background: linear-gradient(#fff, #fff) 0 0 / 100% 2px no-repeat, linear-gradient(#777, #777) 0 5px / 100% 2px no-repeat;
}
.command .grip {
  height: 18px;
}
.command input {
  flex: 1;
  min-width: 0;
  padding-left: 1px;
  border: solid #666;
  border-width: 2px 0 0 2px;
  background: #fff;
  font: 15px "Liberation Mono", "Noto Sans CJK SC", monospace;
}
.status {
  flex: none;
  height: 23px;
  display: flex;
  gap: 4px;
  padding: 3px 0 1px 4px;
  border-top: 1px solid #fff;
}
.coords {
  width: 239px;
  border: 1px solid #999;
  padding-left: 1px;
  font: 10px/17px "DejaVu Sans Mono", monospace;
  white-space: nowrap;
}
.status button {
  padding: 0 1px;
  border: 1px solid #fff;
  border-right-color: #999;
  border-bottom-color: #999;
  line-height: 16px;
}
.status .on {
  border-color: #000 #fff #fff #000;
  background: #f8f8f8;
}
.status .mono {
  font: 10px/16px "DejaVu Sans Mono", monospace;
}
```
